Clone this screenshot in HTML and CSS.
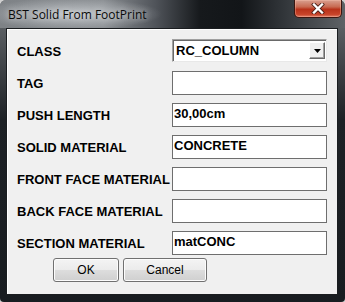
FILE: index.html
```html
<!DOCTYPE html>
<html lang="en">
<head>
    <meta charset="UTF-8">
    <title>BST Solid From FootPrint</title>
    <link rel="stylesheet" href="styles.css">
</head>
<body>

<div class="window">
    <!-- Barre de titre -->
    <div class="titlebar">
        <span class="title">BST Solid From FootPrint</span>
        <div class="close">
            <svg width="14" height="11" viewBox="0 0 14 11">
                <path d="M3 1.5 L11 9.5 M11 1.5 L3 9.5" stroke="#4a2018" stroke-width="4" stroke-linecap="square"/>
                <path d="M3 1.5 L11 9.5 M11 1.5 L3 9.5" stroke="#ffffff" stroke-width="2.4" stroke-linecap="square"/>
            </svg>
        </div>
    </div>

    <!-- Zone client -->
    <div class="client">
        <div class="form">
            <span class="label">CLASS</span>
            <div class="combo">
                <span class="combo-text">RC_COLUMN</span>
                <span class="combo-btn">
                    <svg width="7" height="4" viewBox="0 0 7 4"><path d="M0 0 H7 L3.5 4 Z" fill="#000"/></svg>
                </span>
            </div>

            <span class="label">TAG</span>
            <div class="field"></div>

            <span class="label">PUSH LENGTH</span>
            <div class="field">30,00cm</div>

            <span class="label">SOLID MATERIAL</span>
            <div class="field">CONCRETE</div>

            <span class="label">FRONT FACE MATERIAL</span>
            <div class="field"></div>

            <span class="label">BACK FACE MATERIAL</span>
            <div class="field"></div>

            <span class="label">SECTION MATERIAL</span>
            <div class="field">matCONC</div>
        </div>

        <div class="buttons">
            <div class="button ok">OK</div>
            <div class="button cancel">Cancel</div>
        </div>
    </div>
</div>

</body>
</html>
```

FILE: styles.css
```css
html, body {
    margin: 0;
    padding: 0;
}
body {
    width: 345px;
    height: 302px;
    overflow: hidden;
    background: #d0d0d0;
    font-family: "Liberation Sans", Arial, sans-serif;
}

.window {
    width: 345px;
    height: 302px;
    box-sizing: border-box;
    border-radius: 6px 6px 4px 4px;
    background: linear-gradient(to bottom, #6d7175 0px, #44484c 60px, #1d2125 120px, #181c20 100%);
    display: flex;
    flex-direction: column;
}

/* Barre de titre */
.titlebar {
    height: 28px;
    display: flex;
    align-items: flex-start;
    border-radius: 6px 6px 0 0;
    background:
        radial-gradient(ellipse 90px 16px at 72px 14px, rgba(200, 204, 208, 0.85), rgba(200, 204, 208, 0) 100%),
        linear-gradient(to right, #7e8286 0%, #8a8e92 30%, #50545a 45%, #16191c 58%, #121518 70%, #2c3034 80%, #5e6266 100%);
}
.title {
    font-family: "Open Sans", "Noto Sans", sans-serif;
    font-size: 12px;
    color: #0a0a0a;
    padding: 6px 0 0 8px;
    text-shadow: 0 0 6px rgba(255, 255, 255, 0.7);
}
.close {
    margin-left: auto;
    margin-right: 3px;
    width: 48px;
    height: 18px;
    box-sizing: border-box;
    border: 1px solid #3c1610;
    border-top: none;
    border-radius: 0 0 5px 5px;
    background: linear-gradient(to bottom, #d9a090 0%, #c86a52 40%, #b8321a 55%, #c8442a 85%, #e0806a 100%);
    box-shadow: inset 0 0 0 1px rgba(255, 200, 180, 0.35);
    display: flex;
    align-items: center;
    justify-content: center;
}

/* Zone client */
.client {
    margin: 0 7px 0 6px;
    height: 267px;
    box-sizing: border-box;
    background: #f0f0f0;
    border: 1px solid #1a1d20;
    box-shadow: inset 1px 1px 0 #ffffff;
    padding: 10px 0 0 10px;
}

.form {
    display: grid;
    grid-template-columns: 155px 155px;
    grid-auto-rows: 24px;
    row-gap: 8px;
}
.label {
    align-self: center;
    white-space: nowrap;
    font-size: 13px;
    font-weight: bold;
    color: #000;
}

.field {
    box-sizing: border-box;
    background: #ffffff;
    border: 1px solid #6e6e6e;
    font-size: 13px;
    font-weight: bold;
    line-height: 20px;
    padding-left: 1px;
    color: #000;
}

.combo {
    height: 23px;
    box-sizing: border-box;
    background: #ffffff;
    border-top: 1px solid #a0a0a0;
    border-left: 1px solid #a0a0a0;
    border-right: 1px solid #e8e8e8;
    border-bottom: 1px solid #e8e8e8;
    box-shadow: inset 1px 1px 0 #696969;
    display: flex;
    align-items: center;
    padding: 1px 1px 1px 3px;
}
.combo-text {
    flex: 1;
    font-size: 13px;
    font-weight: bold;
    color: #000;
}
.combo-btn {
    width: 16px;
    height: 17px;
    box-sizing: border-box;
    background: #f0f0f0;
    border-top: 1px solid #ffffff;
    border-left: 1px solid #ffffff;
    border-right: 1px solid #696969;
    border-bottom: 1px solid #696969;
    box-shadow: inset -1px -1px 0 #a0a0a0;
    display: flex;
    align-items: center;
    justify-content: center;
}

/* Boutons */
.buttons {
    display: flex;
    gap: 4px;
    margin: 3px 0 0 36px;
}
.button {
    height: 24px;
    box-sizing: border-box;
    border: 1px solid #707070;
    border-radius: 3px;
    background: linear-gradient(to bottom, #f4f4f4 0%, #ebebeb 50%, #dddddd 51%, #cfcfcf 100%);
    box-shadow: inset 0 0 0 1px #fcfcfc;
    font-size: 12px;
    color: #000;
    display: flex;
    align-items: center;
    justify-content: center;
}
.ok {
    width: 66px;
}
.cancel {
    width: 84px;
}
```
